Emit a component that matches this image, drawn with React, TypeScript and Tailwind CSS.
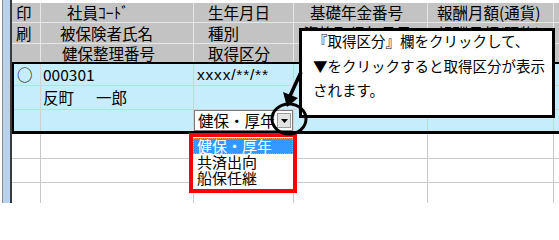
export default function App() {
  const hc = "flex items-center border-r border-b border-[#e6e6e6] text-[15.5px] leading-[17px] whitespace-nowrap";
  const dc = "flex items-center border-r border-b border-[#d2d2d2] text-[15.5px] leading-[17px] whitespace-nowrap";
  const ec = "border-r border-b border-[#c8c8c8]";
  return (
    <div className="relative w-[559px] h-[203px] overflow-hidden bg-white flex font-['Noto_Sans_CJK_JP',sans-serif] text-black">
      <div className="w-[2px] bg-white" />
      <div className="w-px bg-[#8c8c8c]" />
      <div className="w-[7px] bg-[#b9d1ea]" />
      <div className="w-[2px] bg-[#3a3a3a]" />
      <div className="flex-1 flex flex-col pt-[3px] min-w-0">
        {/* header */}
        <div className="grid grid-cols-[29px_153px_100px_134px_126px_1fr] grid-rows-[20px_21px_18px] bg-[#c3c3c3]">
          <div className={`${hc} pl-[4px]`}>印</div>
          <div className={`${hc} pl-[26px]`}>社員ｺｰﾄﾞ</div>
          <div className={`${hc} pl-[14px]`}>生年月日</div>
          <div className={`${hc} pl-[16px]`}>基礎年金番号</div>
          <div className={`${hc} pl-[9px]`}>報酬月額(通貨)</div>
          <div className={`${hc} border-r-0`} />

          <div className={`${hc} pl-[4px]`}>刷</div>
          <div className={`${hc} pl-[19px]`}>被保険者氏名</div>
          <div className={`${hc} pl-[14px]`}>種別</div>
          <div className={`${hc} pl-[9px]`}>資格取得年月日</div>
          <div className={`${hc} pl-[9px]`}>報酬月額(現物)</div>
          <div className={`${hc} border-r-0`} />

          <div className={`${hc} border-b-0`} />
          <div className={`${hc} border-b-0 pl-[21px]`}>健保整理番号</div>
          <div className={`${hc} border-b-0 pl-[14px]`}>取得区分</div>
          <div className={`${hc} border-b-0`} />
          <div className={`${hc} border-b-0`} />
          <div className={`${hc} border-b-0 border-r-0`} />
        </div>

        {/* selected data block */}
        <div className="grid grid-cols-[27px_153px_100px_134px_126px_1fr] grid-rows-[22px_24px_21px] bg-[#c6edfc] border-t-2 border-b-[3px] border-l-2 border-black">
          <div className={`${dc} pl-[3px] text-[14px]`}>○</div>
          <div className={`${dc} pl-[2px]`}>000301</div>
          <div className={`${dc} pl-[3px] text-[9px] font-['Liberation_Sans',sans-serif] tracking-[0.8px]`}>xxxx/**/**</div>
          <div className={dc} />
          <div className={dc} />
          <div className={`${dc} border-r-0`} />

          <div className={dc} />
          <div className={`${dc} pl-[2px]`}>
            <span>反町</span>
            <span className="ml-[22px]">一郎</span>
          </div>
          <div className={dc} />
          <div className={dc} />
          <div className={dc} />
          <div className={`${dc} border-r-0`} />

          <div className={`${dc} border-b-0`} />
          <div className={`${dc} border-b-0`} />
          <div className={`${dc} border-b-0 items-stretch`}>
            <div className="flex-1 flex items-center bg-white border border-[#7a7a7a] pl-[3px] overflow-hidden">
              <span className="flex-1 overflow-hidden">健保・厚年</span>
              <div className="w-[14px] h-[15px] mr-[1px] flex items-center justify-center bg-[#e3e3e3] border border-[#9a9a9a]">
                <svg width="7" height="4" viewBox="0 0 7 4"><path d="M0 0h7L3.5 4z" fill="#000" /></svg>
              </div>
            </div>
          </div>
          <div className={`${dc} border-b-0`} />
          <div className={`${dc} border-b-0`} />
          <div className={`${dc} border-b-0 border-r-0`} />
        </div>

        {/* empty rows */}
        <div className="grid grid-cols-[29px_153px_100px_134px_126px_1fr] grid-rows-[25px_24px_20px]">
          {Array.from({ length: 3 }).map((_, r) =>
            [0, 1, 2, 3, 4, 5].map((c) => (
              <div key={`${r}-${c}`} className={`${ec} ${c === 5 ? "border-r-0" : ""} ${r === 2 ? "border-b-0" : ""}`} />
            ))
          )}
        </div>
      </div>

      {/* dropdown list */}
      <div className="absolute left-[189px] top-[133px] w-[108px] h-[60px] border-4 border-[#ff0000] bg-white text-[15px] leading-[16px]">
        <div className="mt-[1px] h-[16px] flex items-center pl-[3px] bg-[#3399ff] text-white border border-dotted border-[#f0a050]">健保・厚年</div>
        <div className="h-[16px] flex items-center pl-[4px]">共済出向</div>
        <div className="h-[16px] flex items-center pl-[4px]">船保任継</div>
      </div>

      {/* callout */}
      <div className="absolute left-[299px] top-[28px] w-[256px] h-[90px] bg-white border-[3px] border-black pl-[11px] text-[14.5px] leading-[24.5px] whitespace-nowrap">
        <div className="-mt-[2px]">『取得区分』欄をクリックして、</div>
        <div>▼をクリックすると取得区分が表示</div>
        <div>されます。</div>
      </div>

      {/* arrow + circle */}
      <svg className="absolute left-0 top-0 pointer-events-none" width="559" height="203" viewBox="0 0 559 203">
        <line x1="301" y1="72" x2="290" y2="96" stroke="#000" strokeWidth="3.5" />
        <path d="M283 92 L298 98 L287 107 Z" fill="#000" />
        <ellipse cx="289" cy="119" rx="17" ry="15" fill="none" stroke="#000" strokeWidth="3" />
      </svg>
    </div>
  );
}
